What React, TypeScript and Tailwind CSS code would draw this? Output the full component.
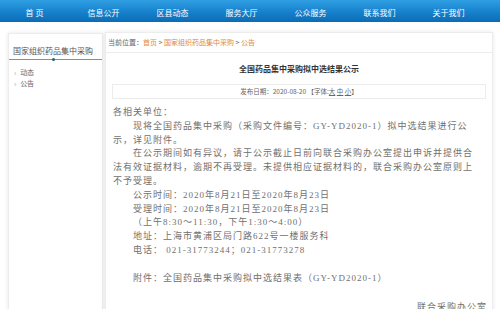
import React from "react";

const nav = ["首 页", "信息公开", "区县动态", "服务大厅", "公众服务", "联系我们", "关于我们"];

const body: { t: string; indent?: boolean; right?: boolean }[] = [
  { t: "各相关单位：" },
  { t: "现将全国药品集中采购（采购文件编号：GY-YD2020-1）拟中选结果进行公", indent: true },
  { t: "示，详见附件。" },
  { t: "在公示期间如有异议，请于公示截止日前向联合采购办公室提出申诉并提供合", indent: true },
  { t: "法有效证据材料，逾期不再受理。未提供相应证据材料的，联合采购办公室原则上" },
  { t: "不予受理。" },
  { t: "公示时间：2020年8月21日至2020年8月23日", indent: true },
  { t: "受理时间：2020年8月21日至2020年8月23日", indent: true },
  { t: "（上午8:30～11:30，下午1:30～4:00）", indent: true },
  { t: "地址：上海市黄浦区局门路622号一楼服务科", indent: true },
  { t: "电话： 021-31773244；021-31773278", indent: true },
  { t: "\u00a0" },
  { t: "附件：全国药品集中采购拟中选结果表（GY-YD2020-1）", indent: true },
  { t: "\u00a0" },
  { t: "联合采购办公室", right: true },
];

export default function App() {
  const sans = { fontFamily: '"Noto Sans CJK SC", "Noto Sans", sans-serif' };
  return (
    <div className="w-[500px] h-[309px] overflow-hidden bg-white" style={sans}>
      <div className="h-[22px] bg-gradient-to-b from-[#2f9fe2] via-[#1883cf] to-[#0b6cb5] flex">
        {nav.map((n) => (
          <div key={n} className="w-[69px] text-center text-[8px] leading-[22px] pt-[2px] text-white">
            {n}
          </div>
        ))}
      </div>
      <div className="flex mt-[11px] h-[280px]">
        <div className="ml-[8px] w-[95px] border border-[#ececec] shadow-[0_0_4px_rgba(0,0,0,0.10)] bg-white">
          <div className="relative h-[26px] flex items-end pb-[3px] pl-[4px] border-b border-[#5f9fae] text-[8px] leading-[10px] text-[#555]">
            国家组织药品集中采购
            <span className="absolute left-[43px] bottom-[-2px] w-[3px] h-[3px] rounded-full bg-[#2c5f6e]"></span>
          </div>
          <div className="pt-[7px] pl-[5px] text-[7px] leading-[11px] text-[#666]">
            <div className="flex gap-[4px]"><span className="text-[#999]">›</span>动态</div>
            <div className="flex gap-[4px]"><span className="text-[#999]">›</span>公告</div>
          </div>
        </div>
        <div className="ml-[2px] w-[388px] -mt-[1px] border border-[#ececec] shadow-[0_0_4px_rgba(0,0,0,0.10)] bg-white">
          <div className="h-[20px] border-b border-[#ececec] flex items-center pl-[2px] text-[7px] text-[#666]">
            当前位置：<span className="text-[#e3893a]">首页</span>&nbsp;&gt;&nbsp;
            <span className="text-[#e3893a]">国家组织药品集中采购</span>&nbsp;&gt;&nbsp;
            <span className="text-[#e3893a]">公告</span>
          </div>
          <div className="h-[31px] flex items-center justify-center text-[8px] font-bold text-[#333]">
            全国药品集中采购拟中选结果公示
          </div>
          <div className="mx-[6px] h-[15px] border border-[#ececec] flex items-center justify-center text-[6.5px] text-[#666]">
            发布日期：2020-08-20 【字体:<span className="underline">大</span>&nbsp;<span className="underline">中</span>&nbsp;<span className="underline">小</span>】
          </div>
          <div
            className="pt-[7px] pl-[7px] w-[384px] text-[9px] tracking-[1px] leading-[13.8px] text-[#707070] whitespace-nowrap"
            style={{ fontFamily: '"Liberation Serif", "Noto Sans CJK SC", serif' }}
          >
            {body.map((l, i) => (
              <div key={i} className={l.indent ? "pl-[20px]" : l.right ? "text-right pr-[3px] pt-[2px]" : ""}>
                {l.t}
              </div>
            ))}
          </div>
        </div>
      </div>
    </div>
  );
}
